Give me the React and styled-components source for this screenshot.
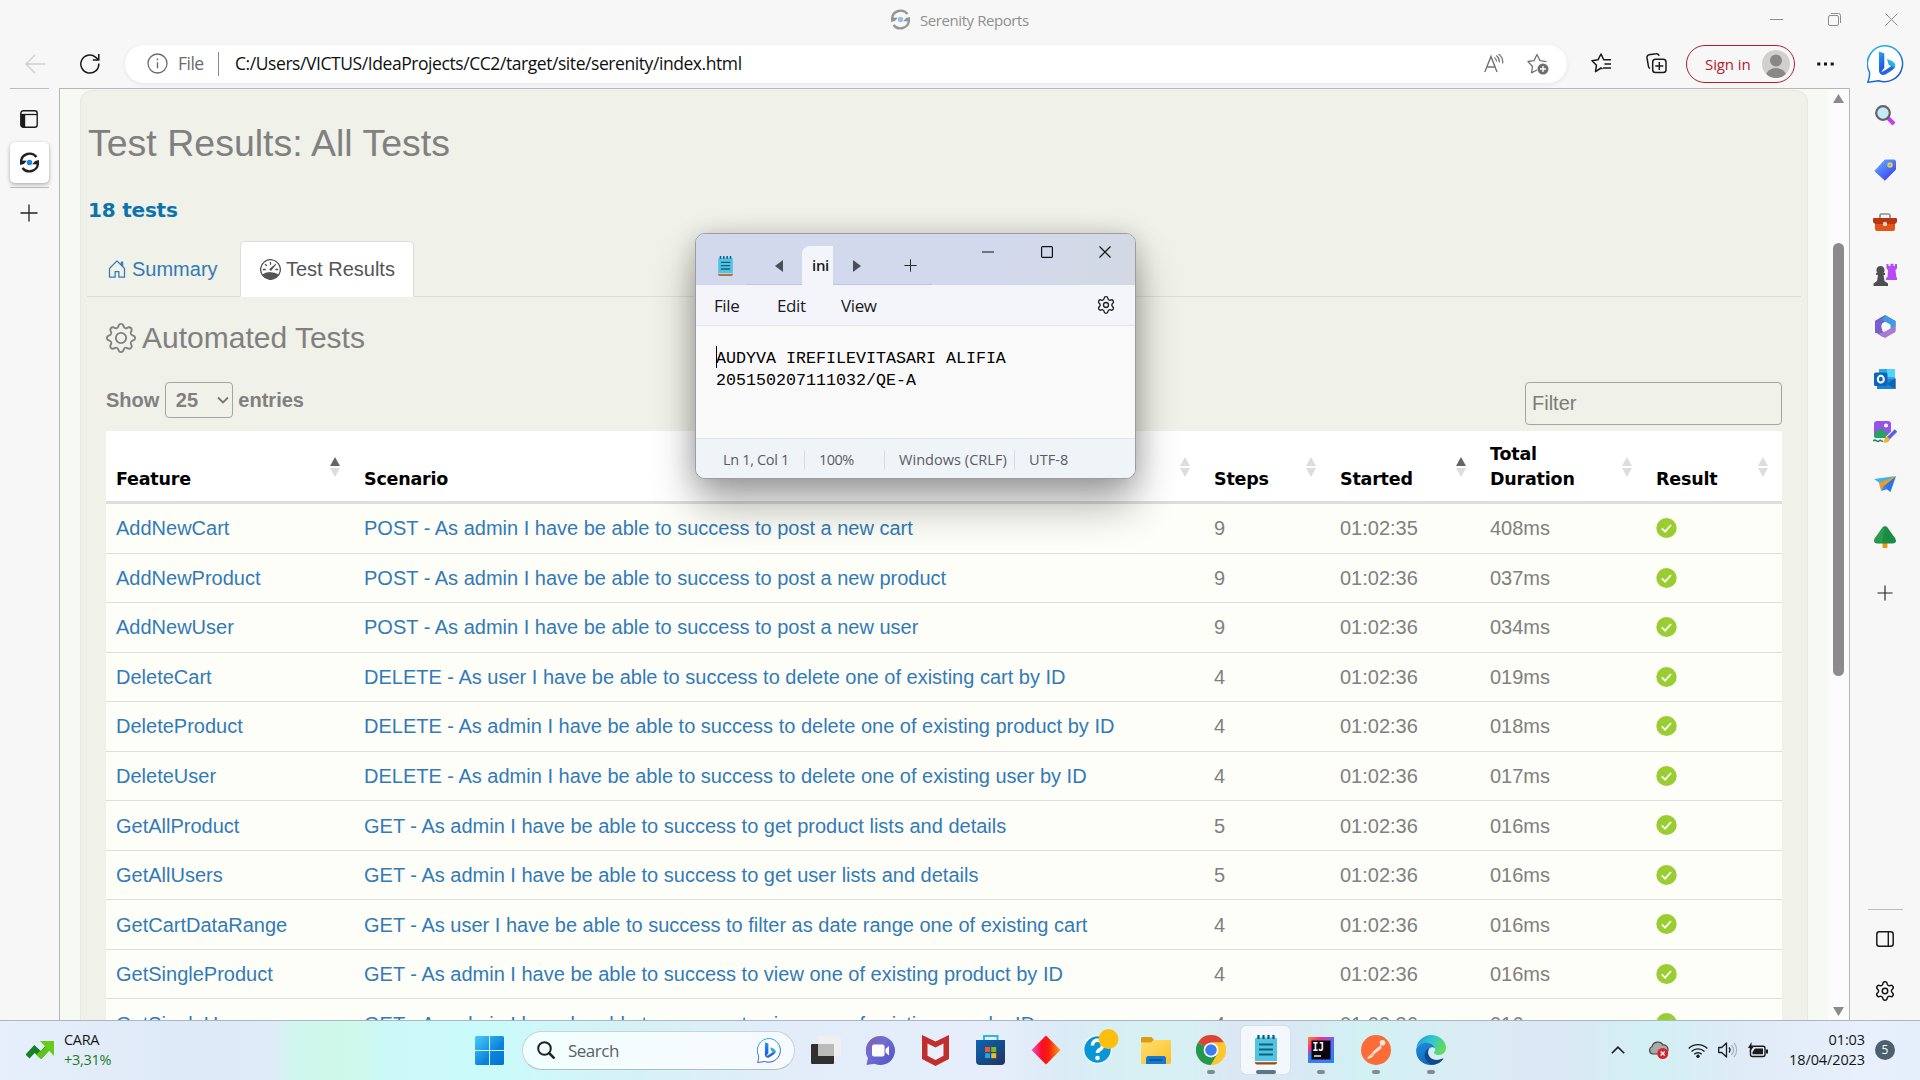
import React from "react";
import styled, { createGlobalStyle, css } from "styled-components";
import { BsHouseDoor, BsSpeedometer, BsGear } from "react-icons/bs";
import { Settings } from "lucide-react";

const UI = '"Open Sans", "Noto Sans", sans-serif';
const ARIAL = '"Liberation Sans", Arial, sans-serif';
const VERDANA = '"DejaVu Sans", Verdana, sans-serif';

const Global = createGlobalStyle`
  *, *::before, *::after { box-sizing: border-box; }
  body { margin: 0; background: #f7f7f7; overflow: hidden; }
  svg { display: block; flex: none; }
`;

/* ---------- browser shell ---------- */

const Screen = styled.div`
  width: 1920px;
  height: 1080px;
  display: flex;
  flex-direction: column;
  position: relative;
  overflow: hidden;
  background: #f7f7f7;
  font-family: ${UI};
  color: #1b1b1b;
`;

const TitleBar = styled.header`
  height: 40px;
  flex: none;
  display: flex;
  align-items: center;
  padding-left: 890px;
  padding-bottom: 1px;
  gap: 9px;
`;

const WindowTitle = styled.span`
  flex: 1;
  font-size: 15px;
  line-height: 20px;
  letter-spacing: -0.42px;
  color: #8f8f8f;
`;

const Slot = styled.div`
  width: ${(p) => p.$w}px;
  height: ${(p) => (p.$h ? `${p.$h}px` : "auto")};
  flex: none;
  display: flex;
  align-items: center;
  justify-content: center;
`;

const Toolbar = styled.div`
  height: 48px;
  flex: none;
  display: flex;
  align-items: center;
  padding-bottom: 1px;
`;

const AddressBar = styled.div`
  width: 1442px;
  height: 38px;
  margin-left: 15px;
  padding: 0 18px 0 22px;
  display: flex;
  align-items: center;
  background: #fff;
  border-radius: 19px;
  box-shadow: 0 1px 5px rgba(0, 0, 0, 0.08);
  font-size: 17.5px;
  line-height: 24px;
`;

const Scheme = styled.span`
  width: 50px;
  padding: 0 0 1px 10px;
  flex: none;
  color: #6b6b6b;
  letter-spacing: -0.5px;
`;

const AddressRule = styled.i`
  width: 1px;
  height: 24px;
  margin-right: 16px;
  background: #8a8a8a;
`;

const Url = styled.span`
  flex: 1;
  padding-bottom: 1px;
  letter-spacing: -0.43px;
  white-space: nowrap;
  color: #101010;
`;

const AddressActions = styled.div`
  display: flex;
  align-items: center;
  gap: 23px;
`;

const SignIn = styled.div`
  width: 109px;
  height: 38px;
  margin-left: 9px;
  padding: 0 4px 0 18px;
  display: flex;
  align-items: center;
  justify-content: space-between;
  border: 1.5px solid #b3202a;
  border-radius: 19px;
  color: #b3202a;
  font-size: 15px;
  letter-spacing: -0.1px;
  white-space: nowrap;
`;

const Body = styled.div`
  height: 932px;
  flex: none;
  display: flex;
`;

const LeftRail = styled.aside`
  width: 59px;
  flex: none;
  padding: 0 10px;
  display: flex;
  flex-direction: column;
`;

const PaneToggle = styled.div`
  height: 53px;
  flex: none;
  padding: 21px 0 0 10px;
`;

const RailRule = styled.i`
  height: 1px;
  width: ${(p) => p.$w || 39}px;
  flex: none;
  margin-top: ${(p) => p.$mt || 0}px;
  background: #bdbdbd;
`;

const VerticalTab = styled.div`
  width: 39px;
  height: 41px;
  flex: none;
  display: flex;
  align-items: center;
  justify-content: center;
  background: #fff;
  border-radius: 5px;
  box-shadow: 0 2px 4px rgba(0, 0, 0, 0.25), 0 0 2px rgba(0, 0, 0, 0.12);
`;

const RightRail = styled.aside`
  width: 70px;
  flex: none;
  display: flex;
  flex-direction: column;
  align-items: center;
`;

const Spacer = styled.div`
  flex: 1;
`;

const Viewport = styled.main`
  width: 1791px;
  flex: none;
  display: flex;
  border: 1px solid #b6b6b6;
  border-bottom: 0;
  background: #f7f9f3;
  overflow: hidden;
`;

const Page = styled.div`
  width: 1768px;
  flex: none;
  padding: 1px 20px 0;
  font-family: ${ARIAL};
  color: #808080;
`;

const ScrollTrack = styled.div`
  width: 21px;
  flex: none;
  display: flex;
  flex-direction: column;
  align-items: center;
  padding: 5px 0 4px;
  background: #fcfcfc;
`;

const ScrollThumb = styled.div`
  width: 11px;
  height: 433px;
  margin-top: 140px;
  border-radius: 6px;
  background: #8b8b8b;
`;

/* ---------- report page ---------- */

const Card = styled.section`
  height: 1000px;
  padding: 0 6px;
  border: 1px solid #e6e7e1;
  border-radius: 12px;
  background: #f0f1e8;
`;

const PageHeading = styled.h1`
  margin: 32px 0 0;
  padding-left: 1px;
  font-size: 37.5px;
  line-height: 41px;
  font-weight: 400;
`;

const TestCount = styled.div`
  margin: 32px 0 17px;
  padding-left: 1px;
  font: 700 20px/28px ${VERDANA};
  letter-spacing: -0.2px;
  color: #0b74ad;
`;

const Tabs = styled.nav`
  height: 56px;
  display: flex;
  border-bottom: 1px solid #dcdddd;
`;

const Tab = styled.a`
  height: 56px;
  display: flex;
  align-items: center;
  gap: 5px;
  font-size: 20px;
  line-height: 28px;
  white-space: nowrap;
  border: 1px solid transparent;
  ${(p) =>
    p.$active
      ? css`
          width: 174px;
          padding-left: 19px;
          color: #555;
          background: #fff;
          border-color: #dcdddd;
          border-bottom-color: #fff;
          border-radius: 5px 5px 0 0;
        `
      : css`
          width: 153px;
          padding-left: 19px;
          color: #337ab7;
        `}
`;

const Pane = styled.div`
  padding: 0 19px;
`;

const PaneHeading = styled.h2`
  margin: 24px 0 28px;
  display: flex;
  align-items: center;
  gap: 6px;
  font-size: 30px;
  line-height: 33px;
  font-weight: 400;
`;

const Controls = styled.div`
  height: 49px;
  display: flex;
  justify-content: space-between;
  font-size: 20px;
`;

const Length = styled.label`
  height: 36px;
  display: flex;
  align-items: center;
  gap: 5.5px;
  font-weight: 700;
`;

const LengthSelect = styled.span`
  width: 68px;
  height: 36px;
  padding: 0 3px 0 10px;
  display: flex;
  align-items: center;
  justify-content: space-between;
  border: 1px solid #a5a5a5;
  border-radius: 4px;
`;

const Filter = styled.div`
  width: 257px;
  height: 43px;
  padding: 0 6px;
  display: flex;
  align-items: center;
  border: 1px solid #a5a5a5;
  border-radius: 4px;
  color: #7b7b7b;
`;

const columns = css`
  display: grid;
  grid-template-columns: 248px 850px 126px 150px 166px 136px;
`;

const HeadRow = styled.div`
  ${columns}
  height: 73px;
  background: #fff;
  border-bottom: 3px solid #ddd;
`;

const HeadCell = styled.div`
  padding: 10px 14px 9px 10px;
  display: flex;
  justify-content: space-between;
  align-items: flex-end;
  font: 700 17.5px/25px ${VERDANA};
  letter-spacing: -0.2px;
  color: #000;
`;

const SortMark = styled.svg`
  margin-bottom: 15px;
`;

const Row = styled.div`
  ${columns}
  height: 49.56px;
  background: #fdfef8;
  border-bottom: 1px solid #ddd;
  font-size: 20px;
  line-height: 28.5px;
`;

const Cell = styled.div`
  padding: 10.3px 10px 0;
  white-space: nowrap;
  color: ${(p) => (p.$link ? "#337ab7" : "#808080")};
`;

const CheckWrap = styled.div`
  padding: 14px 10px 0;
`;

/* ---------- notepad ---------- */

const NotepadWindow = styled.div`
  position: absolute;
  left: 695px;
  top: 233px;
  width: 441px;
  height: 246px;
  display: flex;
  flex-direction: column;
  border: 1px solid #9c9da0;
  border-radius: 10px;
  overflow: hidden;
  background: #f9f9f9;
`;

const NotepadShadow = styled.div`
  position: absolute;
  left: 696px;
  top: 234px;
  width: 439px;
  height: 244px;
  border-radius: 10px;
  box-shadow: 0 26px 44px rgba(0, 0, 0, 0.33), 0 2px 26px rgba(0, 0, 0, 0.2);
`;

const NotepadTitle = styled.div`
  height: 51px;
  flex: none;
  display: flex;
  background: linear-gradient(90deg, #d3d9ec 70%, #d2d9e3);
`;

const NotepadTabs = styled.div`
  width: 236px;
  padding-top: 12px;
  display: flex;
`;

const TabWell = styled.div`
  width: ${(p) => p.$w}px;
  padding-left: ${(p) => p.$pl || 0}px;
  padding-top: 1px;
  display: flex;
  align-items: center;
  gap: 43px;
  border-bottom: 1px solid ${(p) => (p.$bare ? "transparent" : "#bfc5da")};
`;

const NotepadTab = styled.div`
  width: 31px;
  padding-left: 10px;
  background: #f3f5fb;
  border-radius: 8px 0 0 0;
  font-size: 15px;
  line-height: 38px;
  font-weight: 600;
  letter-spacing: -0.3px;
  overflow: hidden;
`;

const NotepadButtons = styled.div`
  flex: 1;
  height: 36px;
  padding: 0 24px 0 50px;
  display: flex;
  align-items: center;
  justify-content: space-between;
`;

const NotepadMenu = styled.div`
  height: 41px;
  flex: none;
  padding: 0 19px 0 18px;
  display: flex;
  align-items: center;
  background: #f3f5fb;
  border-bottom: 1px solid #e3e5ea;
  font-size: 17px;
`;

const MenuItem = styled.span`
  width: ${(p) => p.$w}px;
  letter-spacing: -0.4px;
`;

const NotepadText = styled.pre`
  flex: 1;
  margin: 0;
  padding: 20px 0 0 20px;
  font: 16.66px/22.4px "Liberation Mono", monospace;
  color: #000;
`;

const Caret = styled.i`
  display: inline-block;
  width: 1px;
  height: 22px;
  margin-right: -1px;
  vertical-align: -5px;
  background: #000;
`;

const NotepadStatus = styled.div`
  height: 40px;
  flex: none;
  display: flex;
  align-items: center;
  padding: 2px 0 0 13px;
  border-top: 1px solid #e0e4e8;
  background: #eff4f9;
  font-size: 14.5px;
  color: #5a5c5e;
`;

const StatusItem = styled.span`
  width: ${(p) => p.$w}px;
  height: 20px;
  padding-left: 14px;
  line-height: 20px;
  letter-spacing: ${(p) => p.$ls}px;
  white-space: nowrap;
  border-right: ${(p) => (p.$last ? 0 : "1px solid #d8dde2")};
`;

/* ---------- taskbar ---------- */

const Taskbar = styled.footer`
  height: 60px;
  flex: none;
  display: flex;
  align-items: center;
  position: relative;
  padding-bottom: 1px;
  border-top: 1px solid #a9b8c3;
  background: linear-gradient(
    90deg,
    #e6effb 0,
    #dfeaf8 180px,
    #dfebf8 272px,
    #d0f6ee 292px,
    #cff9ea 350px,
    #cbf9f8 390px,
    #cbfafb 500px,
    #d6f1f5 640px,
    #e2edf9 790px,
    #e6eefb 1000px,
    #dbebf6 1060px,
    #d6f0f4 1130px,
    #d6f0f4 1190px,
    #dbe8f3 1230px,
    #d9e9f3 1290px,
    #d2f1f3 1370px,
    #d8edf4 1440px,
    #dce8f5 1530px,
    #d9eaf5 1580px,
    #d2f0f4 1650px,
    #dfebf7 1740px,
    #e7f0fc 1860px,
    #e5effb 1920px
  );
`;

const Widget = styled.div`
  width: 475px;
  padding-left: 26px;
  display: flex;
  align-items: center;
  gap: 10px;
`;

const Lines = styled.div`
  display: flex;
  flex-direction: column;
  width: ${(p) => p.$w || "auto"};
  text-align: ${(p) => (p.$w ? "right" : "left")};
  font-size: 14.5px;
  line-height: 20px;
  letter-spacing: ${(p) => (p.$w ? -0.1 : -0.3)}px;
  color: #161616;
  white-space: nowrap;
`;

const Gain = styled.span`
  color: #1a7a1a;
`;

const SearchPill = styled.div`
  width: 273px;
  height: 39px;
  margin: 0 3px 0 18px;
  padding: 0 12px 0 14px;
  display: flex;
  align-items: center;
  gap: 13px;
  border: 1px solid #c3d6dd;
  border-bottom-color: #a9bfc8;
  border-radius: 20px;
  background: linear-gradient(90deg, #f2fefe, #f7fafe);
  color: #5c6163;
  font-size: 17px;
  letter-spacing: -0.5px;
`;

const SearchLabel = styled.span`
  flex: 1;
`;

const AppSlot = styled.div`
  position: relative;
  width: 55px;
  height: 48px;
  flex: none;
  display: flex;
  align-items: center;
  justify-content: center;
  &::before {
    content: "";
    position: absolute;
    inset: 0 3px;
    border-radius: 5px;
    background: ${(p) => (p.$active ? "rgba(247,250,254,.85)" : "transparent")};
    box-shadow: ${(p) => (p.$active ? "0 0 1px rgba(0,0,0,.3)" : "none")};
  }
  &::after {
    content: "";
    position: absolute;
    bottom: 0;
    left: 50%;
    transform: translateX(-50%);
    width: ${(p) => (p.$active ? 20 : p.$running ? 8 : 0)}px;
    height: 4px;
    border-radius: 2px;
    background: ${(p) => (p.$active ? "#5e7683" : "#838b92")};
  }
  svg { position: relative; }
`;

const Tray = styled.div`
  margin-left: auto;
  padding-right: 25px;
  display: flex;
  align-items: center;
`;

const Badge = styled.span`
  width: 20px;
  height: 20px;
  margin-left: 10px;
  border-radius: 50%;
  background: #4c606d;
  color: #fff;
  font-size: 12px;
  line-height: 20px;
  text-align: center;
`;

/* ---------- drawings ---------- */

const Ico = ({ w = 20, h, box, children, ...rest }) => (
  <svg width={w} height={h || w} viewBox={box || `0 0 ${w} ${h || w}`} fill="none" {...rest}>
    {children}
  </svg>
);

const SerenityMark = ({ faded }) => (
  <Ico w={21} opacity={faded ? 0.45 : 1}>
    <path d="M2 9.500A8.700 8.700 0 0 1 17.500 5M19 11.500A8.700 8.700 0 0 1 3.500 16" stroke="#222" strokeWidth="2.400" />
    <path d="M1 8.500l6.800.2-2.900 3.200-3.900 1zM20 12.500l-6.800-.2 2.900-3.200 3.900-1z" fill="#222" />
    <circle cx="10.500" cy="10.500" r="2.700" fill="#1b86e0" />
  </Ico>
);

const Plus = ({ size = 18, color = "#222" }) => (
  <Ico w={size} box="0 0 18 18">
    <path d="M9 .5v17M.5 9h17" stroke={color} strokeWidth="1.300" />
  </Ico>
);

const Bing = ({ size = 38 }) => (
  <Ico w={size} box="0 0 38 38">
    <defs>
      <linearGradient id="bingRing" x1="0" y1="0" x2="0.500" y2="1">
        <stop offset="0" stopColor="#25bdf2" />
        <stop offset="1" stopColor="#1d58d6" />
      </linearGradient>
      <linearGradient id="bingB" x1="0" y1="0" x2="0.300" y2="1">
        <stop offset="0" stopColor="#26a6f3" />
        <stop offset="1" stopColor="#1a52e0" />
      </linearGradient>
      <linearGradient id="bingTail" x1="1" y1="0" x2="0" y2="1">
        <stop offset="0" stopColor="#2de0d0" />
        <stop offset="1" stopColor="#2478ee" />
      </linearGradient>
    </defs>
    <path
      d="M19 .8a18 18 0 1 1-7.500 34.900c-3 .6-6.500 1.100-10.700 1.500 1.400-3.300 2-7.200 1.700-10A18 18 0 0 1 19 .8z"
      fill="#fff" stroke="url(#bingRing)" strokeWidth="1.500"
    />
    <path d="M12 6.500l5.300 2v14.200l-4 5.300c-1-.8-1.300-1.800-1.300-3z" fill="url(#bingB)" />
    <path d="M12 24.500c1 3 3.500 2.500 6 .8l4.500-3 5.500-3.800c.6 2.500-.3 4.800-2.500 6.500l-6.500 4.300c-3 1.800-7 .7-7-4.800z" fill="#2566ea" />
    <path d="M20 14l5 2c3.200 1.600 4 4.800 2.500 7.800-.5-1.400-1.300-2.100-2.700-2.600l-3-1.300z" fill="url(#bingTail)" />
  </Ico>
);

const GearIcon = ({ size, color = "#222" }) => <Settings size={size} strokeWidth={1.6} color={color} />;

const NotepadMark = ({ w, h }) => (
  <Ico w={w} h={h} box="0 0 22 30">
    <path d="M0 26h22v1.500a2 2 0 0 1-2 2H2a2 2 0 0 1-2-2z" fill="#9a4b10" />
    <path d="M0 26h22v1.200H0z" fill="#f4f4f4" />
    <path d="M0 4.500A2 2 0 0 1 2 2.500h18a2 2 0 0 1 2 2V26H0z" fill="#52c4e2" />
    <path d="M4 9.500h14M4 14.500h14M4 19.500h14" stroke="#0c6380" strokeWidth="1.900" />
    <path d="M3.500 0v4M8.500 0v4M13.500 0v4M18.500 0v4" stroke="#0c5a7a" strokeWidth="2.200" />
  </Ico>
);

const Sort = ({ asc }) => (
  <SortMark width="10" height="20" viewBox="0 0 10 20">
    <path d="M5 0l5 9H0z" fill={asc ? "#666" : "#ddd"} />
    <path d="M0 11h10l-5 9z" fill="#ddd" />
  </SortMark>
);

const Passed = () => (
  <Ico w={21} h={20}>
    <ellipse cx="10.500" cy="10" rx="10.200" ry="10" fill="#9acd32" />
    <path d="M5.800 10.300l3.300 3.300 5.900-6.600" stroke="#fff" strokeWidth="1.800" />
  </Ico>
);

const sideIcons = [
  <Ico w={21} key="search">
    <path d="M13 13l6 6" stroke="#c33df2" strokeWidth="4" />
    <circle cx="8" cy="8" r="6.800" fill="#c5e9fb" stroke="#626365" strokeWidth="2.200" />
  </Ico>,
  <Ico w={22} key="tag">
    <defs>
      <linearGradient id="tagFill" x1="0" y1="0" x2=".8" y2="1">
        <stop offset="0" stopColor="#66b5ff" /><stop offset="1" stopColor="#3b3cf0" />
      </linearGradient>
    </defs>
    <path d="M11 1h9a1.500 1.500 0 0 1 1.500 1.500v8L11 21.300.8 12z" fill="url(#tagFill)" stroke="url(#tagFill)" strokeLinejoin="round" />
    <circle cx="16" cy="6" r="2" fill="#7db3ff" stroke="#f3d22e" strokeWidth="1.500" />
  </Ico>,
  <Ico w={24} h={18} key="case">
    <path d="M7 5V2.500A1.500 1.500 0 0 1 8.500 1h7A1.500 1.500 0 0 1 17 2.500V5" stroke="#8d8d8f" strokeWidth="1.700" />
    <path d="M2 9h20v7a2 2 0 0 1-2 2H4a2 2 0 0 1-2-2z" fill="#e2541b" />
    <path d="M1 5h22a1 1 0 0 1 1 1v3l-2 2H2L0 9V6a1 1 0 0 1 1-1z" fill="#b93610" />
    <circle cx="12" cy="11" r="2.200" fill="#d7d7d7" />
  </Ico>,
  <Ico w={24} key="chess">
    <path d="M13.500 1h2v2h2V.8h3V3h1.500V1h2v4.500l-1.500 1.500.8 7 1 1V17H13v-2l1.500-1 .5-7-1.500-1.500z" fill="#b64bf7" />
    <path d="M7.500 3a4 4 0 0 1 3 6.700h1.500v2.300h-1.500l1 6 3.500 2.500V23H.5v-2.500L4 18l1-6H3.200V9.700h1.300A4 4 0 0 1 7.500 3z" fill="#4e4f51" />
  </Ico>,
  <Ico w={23} key="office">
    <path d="M11 0l10.500 6v6L15 8.500 11 6.500 7.500 9 7.800 16 1 18V6z" fill="#5a5fd0" />
    <path d="M11 0l10.500 6v10l-5-3V9.500L8 5z" fill="#3f9be4" />
    <path d="M1 6l7-4v13l3 4-2 3L1 17z" fill="#7560cc" />
    <path d="M21.500 11v6L11 23l-7-4 8-3 5-3z" fill="#a77ad3" />
    <circle cx="11.300" cy="11.500" r="3.900" fill="#f7f7f7" />
  </Ico>,
  <Ico w={22} key="outlook">
    <path d="M5 1h16v10H5z" fill="#2ba9ea" /><path d="M13 1h8v8h-8z" fill="#54d2fb" />
    <path d="M3 11h18.500v10H3z" fill="#1784d4" /><path d="M13 16l8.500-6v11z" fill="#0f65b3" />
    <rect y="4.500" width="13.500" height="13.500" rx="1.500" fill="#0e66b8" />
    <ellipse cx="6.800" cy="11.200" rx="3" ry="3.400" stroke="#fff" strokeWidth="2" />
  </Ico>,
  <Ico w={24} key="image">
    <rect x="1" y="1" width="17" height="17" rx="3" fill="#9553ec" />
    <circle cx="13" cy="5.500" r="2" fill="#fff" />
    <path d="M1 14l5-4.500a3 3 0 0 1 4 0l6 6-3 2.500H3a2 2 0 0 1-2-2z" fill="#28a168" />
    <path d="M0 18h9l3 6H0z" fill="#f7f7f7" />
    <path d="M0 21c3-3 4 2 6 0s2 1 4 0" stroke="#1d8a55" strokeWidth="1.500" />
    <path d="M23 10.500L14.500 19" stroke="#f7f7f7" strokeWidth="5.600" />
    <path d="M23 10.500L14.500 19" stroke="#5661ec" strokeWidth="3.600" />
    <path d="M14 16.500l3 2.700c-1 3.500-4.500 4-7 3 1.500-1 1-4 4-5.700z" fill="#f4b12c" />
  </Ico>,
  <Ico w={22} h={18} key="plane">
    <path d="M0 4L22 1 7 9z" fill="#3fb2f5" /><path d="M10 10L22 1l-5.500 16-4-3z" fill="#2a77e4" />
    <path d="M5 8l17-7L9 12l-2 4z" fill="#ee9b20" /><path d="M7 16l3-6 4 4z" fill="#3f83e6" />
  </Ico>,
  <Ico w={22} key="tree">
    <path d="M8.500 16h5v5a1 1 0 0 1-1 1h-3a1 1 0 0 1-1-1z" fill="#ee9512" />
    <path d="M8.500 1.500c1.300-1.800 3.700-1.800 5 0l7.800 11c1.600 2.700.2 5-2.800 5h-15c-3 0-4.400-2.300-2.800-5z" fill="#1b8c45" />
    <path d="M8.500 1.500c.8-1.100 1.800-1.300 2.500-1.300l-3 16H2.500c-2 0-3.200-2-1.800-3.700z" fill="#3aac52" opacity=".5" />
  </Ico>,
];

const TaskView = () => (
  <Ico w={30} h={28}>
    <rect x="0" y="8" width="23" height="20" rx="1" fill="#30302f" />
    <rect x="7" y="0" width="23" height="20" rx="1" fill="#efefef" />
    <path d="M7 8h16v12H7z" fill="#b9bab9" />
  </Ico>
);

const Chat = () => (
  <Ico w={29} h={29}>
    <defs>
      <linearGradient id="chatFill" x1="0" y1="0" x2="1" y2="1">
        <stop offset="0" stopColor="#8b5a9e" /><stop offset=".4" stopColor="#6f6fd4" /><stop offset="1" stopColor="#5052c4" />
      </linearGradient>
    </defs>
    <path d="M14.500 0a14.500 14.500 0 1 1-6 27.700L.5 29l1.400-7A14.500 14.500 0 0 1 14.500 0z" fill="url(#chatFill)" />
    <rect x="6" y="8.500" width="12.500" height="12" rx="2" fill="#fff" />
    <path d="M19.500 13l3.500-3v9.500l-3.500-3z" fill="#fff" />
  </Ico>
);

const McAfee = () => (
  <Ico w={27} h={31}>
    <path d="M0 0l13.500 6.500L27 0v24l-13.500 7L0 24z" fill="#c12f2d" />
    <path d="M5.500 8.500l8 4 8-4v12.200l-8 4.300-8-4.300z" fill="#eaf0fb" />
  </Ico>
);

const Store = () => (
  <Ico w={29} h={30}>
    <defs>
      <linearGradient id="storeFill" x1="0" y1="0" x2="1" y2="1">
        <stop offset="0" stopColor="#0a66b4" /><stop offset="1" stopColor="#22335f" />
      </linearGradient>
    </defs>
    <path d="M8 7V1h13.500v6" stroke="#27b7ef" strokeWidth="2" />
    <path d="M0 5h29v21a4 4 0 0 1-4 4H4a4 4 0 0 1-4-4z" fill="url(#storeFill)" />
    <path d="M9 12h5v5H9z" fill="#f0552d" /><path d="M15.200 12h5v5h-5z" fill="#7ebb17" />
    <path d="M9 18.200h5v5H9z" fill="#19a5ec" /><path d="M15.200 18.200h5v5h-5z" fill="#fbb918" />
  </Ico>
);

const Diamond = () => (
  <Ico w={30}>
    <defs>
      <linearGradient id="diaFill">
        <stop offset="0" stopColor="#f055c0" /><stop offset=".35" stopColor="#f80d2a" />
        <stop offset=".6" stopColor="#fa1e0a" /><stop offset="1" stopColor="#f7a51e" />
      </linearGradient>
    </defs>
    <path d="M15 .5L29.500 15 15 29.500.5 15z" fill="url(#diaFill)" />
  </Ico>
);

const HelpArt = styled.svg`
  margin-bottom: 7px;
`;

const Help = () => (
  <HelpArt width="36" height="35" viewBox="0 0 36 35" fill="none">
    <circle cx="14.500" cy="20.500" r="13.800" fill="#0996d8" stroke="#f5fbff" strokeWidth="1.200" />
    <path d="M9.500 16.500a5 5 0 1 1 7 4.300c-1.600.8-2 1.500-2 3.200" stroke="#fff" strokeWidth="3.600" />
    <circle cx="14.500" cy="29" r="2.300" fill="#fff" />
    <circle cx="25.500" cy="10" r="10" fill="#fdbf0f" />
  </HelpArt>
);

const Folder = () => (
  <Ico w={30} h={27}>
    <defs>
      <linearGradient id="folderFill" x1="0" y1="0" x2="1" y2="1">
        <stop offset="0" stopColor="#ffdf70" /><stop offset="1" stopColor="#fcc02b" />
      </linearGradient>
    </defs>
    <path d="M0 1.500A1.500 1.500 0 0 1 1.500 0h9L13 3h15v4H0z" fill="#dd9d12" />
    <path d="M0 5.500h10L12.500 3H29a1 1 0 0 1 1 1v21.500a1.500 1.500 0 0 1-1.500 1.500h-27A1.500 1.500 0 0 1 0 25.500z" fill="url(#folderFill)" />
    <path d="M5 27v-5.500A2.500 2.500 0 0 1 7.500 19h15a2.500 2.500 0 0 1 2.500 2.500V27z" fill="#1577cf" />
    <path d="M8.500 23h13" stroke="#0b4f91" strokeWidth="1.500" />
  </Ico>
);

const Chrome = () => (
  <Ico w={30} box="0 0 48 48">
    <circle cx="24" cy="24" r="24" fill="#fdc82f" />
    <path d="M24 24L3.200 12A24 24 0 0 1 44.800 12H24z" fill="#dd4438" />
    <path d="M24 24L3.200 12A24 24 0 0 0 24 48l10.400-18z" fill="#23984e" />
    <path d="M24 12h20.800A24 24 0 0 1 24 48l10.400-18z" fill="#fdc82f" />
    <circle cx="24" cy="24" r="11.800" fill="#fff" /><circle cx="24" cy="24" r="9.300" fill="#3d7df0" />
  </Ico>
);

const IjText = styled.text`
  font: 700 13px "DejaVu Sans Mono", monospace;
`;

const Intellij = () => (
  <Ico w={26}>
    <defs>
      <linearGradient id="ijFill" x1="0" y1="0" x2="1" y2="1">
        <stop offset="0" stopColor="#fb8b2b" /><stop offset=".25" stopColor="#f9317c" />
        <stop offset=".5" stopColor="#6f63f0" /><stop offset="1" stopColor="#178bf8" />
      </linearGradient>
    </defs>
    <path d="M0 0h26v26H0z" fill="url(#ijFill)" />
    <rect x="1" y="15" width="8" height="10" fill="#1789f5" />
    <path d="M3.500 3.500h19v19h-19z" fill="#0b0310" />
    <IjText x="4.500" y="13.800" fill="#fff" textLength="11.500" lengthAdjust="spacingAndGlyphs">IJ</IjText>
    <path d="M6 19h7" stroke="#fff" strokeWidth="1.400" />
  </Ico>
);

const Postman = () => (
  <Ico w={30}>
    <circle cx="15" cy="15" r="15" fill="#fb6c37" />
    <circle cx="21.500" cy="7.800" r="2.800" fill="#fde4da" />
    <path d="M19.500 11l-7.200 6.300 1 .8 6.500-5.300z" fill="#fff" stroke="#fde4da" strokeWidth="1.500" strokeLinejoin="round" />
    <path d="M12 18l-5.500 5.500M13 19l-1.500 2-4 2.500" stroke="#fde4da" strokeWidth="1.200" />
  </Ico>
);

const Edge = () => (
  <Ico w={30}>
    <defs>
      <linearGradient id="edgeTop" x1="0" y1="0" x2="1" y2=".4">
        <stop offset="0" stopColor="#1d93d6" /><stop offset=".5" stopColor="#31c3d8" /><stop offset="1" stopColor="#5fdc61" />
      </linearGradient>
      <linearGradient id="edgeBody" x1="0" y1="0" x2=".6" y2="1">
        <stop offset="0" stopColor="#1b8fdc" /><stop offset="1" stopColor="#1263b4" />
      </linearGradient>
    </defs>
    <path d="M.3 13C1.500 5.500 7.700 0 15 0c8.500 0 15 6 15 12.500 0 5-3.500 7.500-7.500 7.500-3 0-4.500-1-4.500-2.200 0-1 1.300-1.600 1.300-4C19.300 10.500 15.500 8 10.500 8 5 8 1.500 10.500.3 13z" fill="url(#edgeTop)" />
    <path d="M.2 14C1.300 10 5.500 7.700 10 7.700c5 0 9 2.800 9.300 6-2.300-2.700-7.300-1.500-7.300 3.800 0 6 6.500 10 13.500 7.500C22.500 28.500 19 30 15 30 6.500 30-.8 23 .2 14z" fill="url(#edgeBody)" />
    <path d="M12 17c0-1.500.3-2.700 1-3.700-3.300 1.700-5 5-4 9 1 4.500 4.500 7.500 8.500 7.500 4-.5 7.500-2.500 9.700-5.500.5-.7 0-1-.6-.7C19 27 12 23.500 12 17z" fill="#114a8b" />
  </Ico>
);

const WinLogo = () => (
  <Ico w={29}>
    <defs>
      <linearGradient id="winFill" x1="0" y1="0" x2="29" y2="29" gradientUnits="userSpaceOnUse">
        <stop offset="0" stopColor="#4cc9fb" /><stop offset=".6" stopColor="#0c83dd" /><stop offset="1" stopColor="#0474cf" />
      </linearGradient>
    </defs>
    <path d="M1 0h13v14H0V1zM15 0h13l1 1v13H15zM0 15h14v14H1l-1-1zM15 15h14v13l-1 1H15z" fill="url(#winFill)" />
  </Ico>
);

/* ---------- data ---------- */

const headers = [
  { label: "Feature", asc: true },
  { label: "Scenario" },
  { label: "Steps" },
  { label: "Started", asc: true },
  { label: "Total Duration" },
  { label: "Result" },
];

const rows = [
  ["AddNewCart", "POST - As admin I have be able to success to post a new cart", 9, "01:02:35", "408ms"],
  ["AddNewProduct", "POST - As admin I have be able to success to post a new product", 9, "01:02:36", "037ms"],
  ["AddNewUser", "POST - As admin I have be able to success to post a new user", 9, "01:02:36", "034ms"],
  ["DeleteCart", "DELETE - As user I have be able to success to delete one of existing cart by ID", 4, "01:02:36", "019ms"],
  ["DeleteProduct", "DELETE - As admin I have be able to success to delete one of existing product by ID", 4, "01:02:36", "018ms"],
  ["DeleteUser", "DELETE - As admin I have be able to success to delete one of existing user by ID", 4, "01:02:36", "017ms"],
  ["GetAllProduct", "GET - As admin I have be able to success to get product lists and details", 5, "01:02:36", "016ms"],
  ["GetAllUsers", "GET - As admin I have be able to success to get user lists and details", 5, "01:02:36", "016ms"],
  ["GetCartDataRange", "GET - As user I have be able to success to filter as date range one of existing cart", 4, "01:02:36", "016ms"],
  ["GetSingleProduct", "GET - As admin I have be able to success to view one of existing product by ID", 4, "01:02:36", "016ms"],
  ["GetSingleUser", "GET - As admin I have be able to success to view one of existing user by ID", 4, "01:02:36", "016ms"],
];

const apps = [
  { icon: <TaskView /> },
  { icon: <Chat /> },
  { icon: <McAfee /> },
  { icon: <Store /> },
  { icon: <Diamond /> },
  { icon: <Help /> },
  { icon: <Folder /> },
  { icon: <Chrome />, running: true },
  { icon: <NotepadMark w={22} h={30} />, active: true },
  { icon: <Intellij />, running: true },
  { icon: <Postman />, running: true },
  { icon: <Edge />, running: true },
];

/* ---------- sections ---------- */

const BrowserTop = () => (
  <>
    <TitleBar>
      <SerenityMark faded />
      <WindowTitle>Serenity Reports</WindowTitle>
      <Slot $w={57}>
        <Ico w={13}><path d="M0 6.500h13" stroke="#8d8d8d" /></Ico>
      </Slot>
      <Slot $w={40}>
        <Ico w={13}>
          <rect x=".5" y="2.500" width="10" height="10" rx="1.500" stroke="#8d8d8d" />
          <path d="M3 .5h7.500a2 2 0 0 1 2 2V10" stroke="#8d8d8d" />
        </Ico>
      </Slot>
      <Slot $w={57}>
        <Ico w={13}><path d="M.5.5l12 12M12.500.5l-12 12" stroke="#8d8d8d" /></Ico>
      </Slot>
    </TitleBar>
    <Toolbar>
      <Slot $w={70}>
        <Ico w={20}><path d="M10 1L1 10l9 9M1 10h19" stroke="#cfcfcf" strokeWidth="1.400" /></Ico>
      </Slot>
      <Slot $w={40}>
        <Ico w={20}>
          <path d="M18.800 9.500a9 9 0 1 1-3.300-6.400l3 2.700" stroke="#1b1b1b" strokeWidth="1.500" />
          <path d="M18.800 0v6h-6" stroke="#1b1b1b" strokeWidth="1.500" />
        </Ico>
      </Slot>
      <AddressBar>
        <Ico w={21}>
          <circle cx="10.500" cy="10.500" r="9.500" stroke="#6b6b6b" strokeWidth="1.300" />
          <path d="M10.500 9.300v6M10.500 5.500v1.800" stroke="#6b6b6b" strokeWidth="1.400" />
        </Ico>
        <Scheme>File</Scheme>
        <AddressRule />
        <Url>C:/Users/VICTUS/IdeaProjects/CC2/target/site/serenity/index.html</Url>
        <AddressActions>
          <Ico w={20}>
            <path d="M.8 18L7 2.500 13 18M3 13h8" stroke="#737373" strokeWidth="1.400" />
            <path d="M10.500 3.500c1.500 1 2 2.500 2 4M12.300 1.500c2.200 1.500 3.200 4 3 7M14.500 0c3 2 4.500 5.500 4.200 9.500" stroke="#737373" strokeWidth="1.200" />
          </Ico>
          <Ico w={22}>
            <path d="M10 17l-5.500 2.800 1-6.300L1 8.500l6-.9L10 1.500l3 6.100 6.500 1" stroke="#737373" strokeWidth="1.300" strokeLinejoin="round" />
            <circle cx="16" cy="16" r="5.500" fill="#6f6f6f" />
            <path d="M16 13v6M13 16h6" stroke="#fff" strokeWidth="1.300" />
          </Ico>
        </AddressActions>
      </AddressBar>
      <Slot $w={68}>
        <Ico w={21}>
          <path d="M11.500 15.800L10 15l-5.500 3.600 1-6.400L1 7.700l6-.9L10 1l2.700 5.800H20M13.500 11H20M12 15h8" stroke="#1b1b1b" strokeWidth="1.500" strokeLinejoin="round" />
        </Ico>
      </Slot>
      <Slot $w={42}>
        <Ico w={21}>
          <path d="M4 15.500a2.500 2.500 0 0 1-1.500-2L1 4.800a2.500 2.500 0 0 1 2-3L10 .8a2.500 2.500 0 0 1 3 2" stroke="#1b1b1b" strokeWidth="1.500" />
          <rect x="6.700" y="6.300" width="13.300" height="13.300" rx="2.800" stroke="#1b1b1b" strokeWidth="1.500" />
          <path d="M13.300 9v8M9.300 13h8" stroke="#1b1b1b" strokeWidth="1.500" />
        </Ico>
      </Slot>
      <SignIn>
        Sign in
        <Ico w={28}>
          <defs><clipPath id="face"><circle cx="14" cy="14" r="14" /></clipPath></defs>
          <circle cx="14" cy="14" r="14" fill="#d2d0ce" />
          <g clipPath="url(#face)"><circle cx="14" cy="10.500" r="6" fill="#8a8886" /><ellipse cx="14" cy="25.500" rx="9.800" ry="7.500" fill="#8a8886" /></g>
        </Ico>
      </SignIn>
      <Slot $w={60}>
        <Ico w={17} h={4}><path d="M.3 2h3M7 2h3M13.700 2h3" stroke="#111" strokeWidth="3" /></Ico>
      </Slot>
      <Slot $w={62}><Bing /></Slot>
    </Toolbar>
  </>
);

const Report = () => (
  <Page>
    <Card>
      <PageHeading>Test Results: All Tests</PageHeading>
      <TestCount>18 tests</TestCount>
      <Tabs>
        <Tab><BsHouseDoor size={20} />Summary</Tab>
        <Tab $active><BsSpeedometer size={21} />Test Results</Tab>
      </Tabs>
      <Pane>
        <PaneHeading><BsGear size={30} />Automated Tests</PaneHeading>
        <Controls>
          <Length>
            Show
            <LengthSelect>
              25
              <Ico w={12} h={8}><path d="M1 1.500l5 5 5-5" stroke="#777" strokeWidth="1.800" /></Ico>
            </LengthSelect>
            entries
          </Length>
          <Filter>Filter</Filter>
        </Controls>
        <HeadRow>
          {headers.map((h) => (
            <HeadCell key={h.label}>{h.label}<Sort asc={h.asc} /></HeadCell>
          ))}
        </HeadRow>
        {rows.map(([feature, scenario, steps, started, duration]) => (
          <Row key={feature}>
            <Cell $link>{feature}</Cell>
            <Cell $link>{scenario}</Cell>
            <Cell>{steps}</Cell>
            <Cell>{started}</Cell>
            <Cell>{duration}</Cell>
            <CheckWrap><Passed /></CheckWrap>
          </Row>
        ))}
      </Pane>
    </Card>
  </Page>
);

const Notepad = () => (
  <>
    <NotepadShadow />
    <NotepadWindow>
      <NotepadTitle>
        <NotepadTabs>
          <TabWell $w={50} $pl={22} $bare><NotepadMark w={15} h={20} /></TabWell>
          <TabWell $w={56} $pl={29}><Ico w={8} h={12}><path d="M8 0v12L0 6z" fill="#4c4f58" /></Ico></TabWell>
          <NotepadTab>ini</NotepadTab>
          <TabWell $w={99} $pl={20}>
            <Ico w={8} h={12}><path d="M0 0v12l8-6z" fill="#4c4f58" /></Ico>
            <Plus size={13} />
          </TabWell>
        </NotepadTabs>
        <NotepadButtons>
          <Ico w={12}><path d="M0 6h12" stroke="#111" strokeWidth="1.200" /></Ico>
          <Ico w={12}><rect x=".6" y=".6" width="10.800" height="10.800" rx="1" stroke="#111" strokeWidth="1.200" /></Ico>
          <Ico w={12}><path d="M.5.5l11 11M11.500.5l-11 11" stroke="#111" strokeWidth="1.200" /></Ico>
        </NotepadButtons>
      </NotepadTitle>
      <NotepadMenu>
        <MenuItem $w={63}>File</MenuItem>
        <MenuItem $w={64}>Edit</MenuItem>
        <MenuItem $w={60}>View</MenuItem>
        <Spacer />
        <GearIcon size={20} />
      </NotepadMenu>
      <NotepadText>
        <Caret />{"AUDYVA IREFILEVITASARI ALIFIA\n205150207111032/QE-A"}
      </NotepadText>
      <NotepadStatus>
        <StatusItem $w={96} $ls={-0.33}>Ln 1, Col 1</StatusItem>
        <StatusItem $w={80} $ls={-0.5}>100%</StatusItem>
        <StatusItem $w={130} $ls={0.05}>Windows (CRLF)</StatusItem>
        <StatusItem $w={80} $ls={0.1} $last>UTF-8</StatusItem>
      </NotepadStatus>
    </NotepadWindow>
  </>
);

const SystemTaskbar = () => (
  <Taskbar>
    <Widget>
      <Ico w={28} h={18}>
        <path d="M1.500 15.500l7-7.500 6.500 6 7-8" stroke="#178025" strokeWidth="5.500" />
        <path d="M12 12l3 2.500L23 6" stroke="#5fc41c" strokeWidth="5.500" />
        <path d="M14 0h14v15z" fill="#66cc1a" />
      </Ico>
      <Lines><span>CARA</span><Gain>+3,31%</Gain></Lines>
    </Widget>
    <WinLogo />
    <SearchPill>
      <Ico w={18}>
        <circle cx="7.500" cy="7.500" r="6.300" stroke="#222" strokeWidth="2" />
        <path d="M12 12l5.500 5.500" stroke="#222" strokeWidth="2.500" />
      </Ico>
      <SearchLabel>Search</SearchLabel>
      <Bing size={25} />
    </SearchPill>
    {apps.map((a, i) => (
      <AppSlot key={i} $active={a.active} $running={a.running}>{a.icon}</AppSlot>
    ))}
    <Tray>
      <Slot $w={30}><Ico w={14} h={8}><path d="M.8 7.300L7 1.200l6.200 6.100" stroke="#1b1b1b" strokeWidth="1.600" /></Ico></Slot>
      <Slot $w={50}>
        <Ico w={21} h={18}>
          <path d="M4.500 13A4 4 0 0 1 4 5.500 6 6 0 0 1 15 4a4.500 4.500 0 0 1 1 9z" fill="#a9a9a9" stroke="#444" strokeWidth="1.200" />
          <circle cx="14.700" cy="12.500" r="5.500" fill="#d9232e" />
          <path d="M12.700 10.500l4 4M16.700 10.500l-4 4" stroke="#fff" strokeWidth="1.400" />
        </Ico>
      </Slot>
      <Slot $w={30}>
        <Ico w={20} h={15}>
          <path d="M.7 5.500a13 13 0 0 1 18.600 0M3.500 8.500a9.300 9.300 0 0 1 13 0M6.300 11.300a5.300 5.300 0 0 1 7.400 0" stroke="#1b1b1b" strokeWidth="1.400" />
          <circle cx="10" cy="13.300" r="1.700" fill="#1b1b1b" />
        </Ico>
      </Slot>
      <Slot $w={30}>
        <Ico w={20} h={16}>
          <path d="M.7 5.500h3L8.500 1v14l-4.800-4.500h-3z" stroke="#1b1b1b" strokeWidth="1.300" strokeLinejoin="round" />
          <path d="M11 5.500c1.300 1.500 1.300 3.500 0 5" stroke="#1b1b1b" strokeWidth="1.200" />
          <path d="M13.500 3c2.500 3 2.500 7 0 10M16 1c3.500 4 3.500 10 0 14" stroke="#a8b2ba" strokeWidth="1.200" />
        </Ico>
      </Slot>
      <Slot $w={30}>
        <Ico w={20} h={16}>
          <rect x="2.500" y="4.200" width="14.500" height="10.300" rx="2" stroke="#1b1b1b" strokeWidth="1.400" />
          <path d="M7 6.500h8v5.700H4.500V10z" fill="#1b1b1b" />
          <path d="M18 7.500h2v4h-2z" fill="#1b1b1b" />
          <path d="M3.500 0L0 6h2.500L1.500 10 6 4.500H3.600z" fill="#1b1b1b" />
        </Ico>
      </Slot>
      <Lines $w="92px"><span>01:03</span><span>18/04/2023</span></Lines>
      <Badge>5</Badge>
    </Tray>
  </Taskbar>
);

export default function App() {
  return (
    <Screen>
      <Global />
      <BrowserTop />
      <Body>
        <LeftRail>
          <RailRule />
          <PaneToggle>
            <Ico w={18}>
              <rect x=".8" y=".8" width="16.400" height="16.400" rx="2.500" stroke="#1b1b1b" strokeWidth="1.400" />
              <path d="M1 4.500h16" stroke="#1b1b1b" strokeWidth="1.300" /><path d="M1 4.500h4.200V17H2.500L1 15.500z" fill="#1b1b1b" />
            </Ico>
          </PaneToggle>
          <VerticalTab><SerenityMark /></VerticalTab>
          <RailRule $mt={4} />
          <Slot $w={38} $h={49}><Plus /></Slot>
        </LeftRail>
        <Viewport>
          <Report />
          <ScrollTrack>
            <Ico w={11} h={9}><path d="M5.500 0L11 9H0z" fill="#8b8b8b" /></Ico>
            <ScrollThumb />
            <Spacer />
            <Ico w={11} h={9}><path d="M0 0h11L5.500 9z" fill="#8b8b8b" /></Ico>
          </ScrollTrack>
        </Viewport>
        <RightRail>
          {sideIcons.map((icon, i) => (
            <Slot key={i} $w={i ? 69 : 67} $h={i ? 52.4 : 55.6}>{icon}</Slot>
          ))}
          <Slot $w={69} $h={61}><Plus size={16} /></Slot>
          <Spacer />
          <RailRule $w={35} />
          <Slot $w={70} $h={58}>
            <Ico w={18} h={16}>
              <rect x=".8" y=".8" width="16.400" height="14.400" rx="2.500" stroke="#1b1b1b" strokeWidth="1.500" />
              <path d="M12.300 1v14" stroke="#1b1b1b" strokeWidth="1.400" />
            </Ico>
          </Slot>
          <Slot $w={70} $h={46}><GearIcon size={22} color="#111" /></Slot>
          <Slot $w={70} $h={6} />
        </RightRail>
      </Body>
      <SystemTaskbar />
      <Notepad />
    </Screen>
  );
}
